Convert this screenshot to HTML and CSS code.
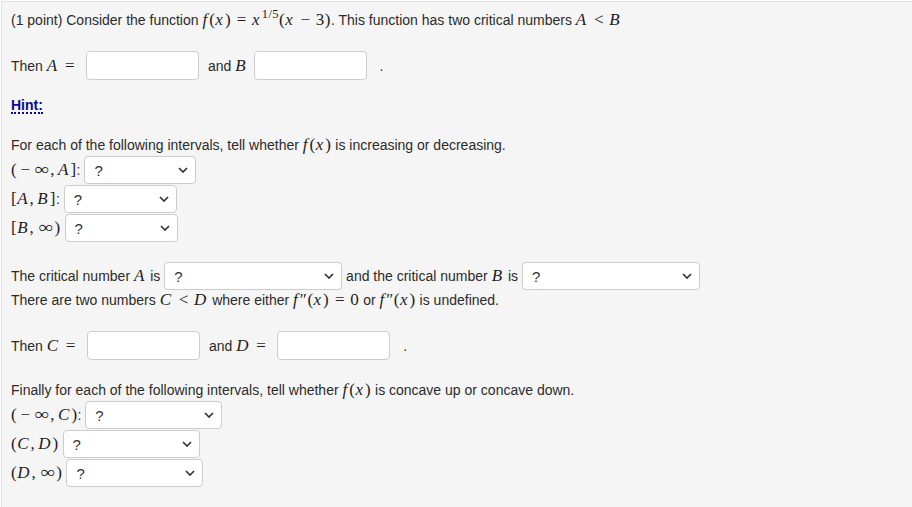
FILE: index.html
```html
<!DOCTYPE html>
<html>
<head>
<meta charset="utf-8">
<link rel="stylesheet" href="styles.css">
</head>
<body>
<div class="problem">
  <div class="line l1">(1 point) Consider the function <span class="m"><i>f</i>(<i>x</i>)<span class="op rel">=</span><i>x</i><sup>1/5</sup>(<i>x</i><span class="op bin">−</span>3)</span>. This function has two critical numbers <span class="m"><i>A</i><span class="op rel">&lt;</span><i>B</i></span></div>

  <div class="row r-ab">Then <span class="m"><i>A</i><span class="op rel">=</span></span> <input class="ans" type="text"> and <span class="m"><i>B</i></span> <input class="ans" type="text"> <span class="dot">.</span></div>

  <div class="line hint-line"><a class="hint" href="#">Hint:</a></div>

  <div class="line for-line">For each of the following intervals, tell whether <span class="m"><i>f</i>(<i>x</i>)</span> is increasing or decreasing.</div>
  <div class="srow first"><span class="m">(<span class="neg">−</span><span class="inf">∞</span>,<span class="th"></span><i>A</i>]</span>: <select class="sel w112"><option>?</option></select></div>
  <div class="srow"><span class="m">[<i>A</i>,<span class="th"></span><i>B</i>]</span>: <select class="sel w113"><option>?</option></select></div>
  <div class="srow"><span class="m">[<i>B</i>,<span class="th"></span><span class="inf">∞</span>)</span> <select class="sel w113"><option>?</option></select></div>

  <div class="srow crit">The critical number <span class="m"><i>A</i></span> is <select class="sel w177"><option>?</option></select> and the critical number <span class="m"><i>B</i></span> is <select class="sel w177"><option>?</option></select></div>
  <div class="line">There are two numbers <span class="m"><i>C</i><span class="op rel">&lt;</span><i>D</i></span> where either <span class="m"><i>f</i>″(<i>x</i>)<span class="op rel">=</span>0</span> or <span class="m"><i>f</i>″(<i>x</i>)</span> is undefined.</div>

  <div class="row r-cd">Then <span class="m"><i>C</i><span class="op rel">=</span></span> <input class="ans" type="text"> and <span class="m"><i>D</i><span class="op rel">=</span></span> <input class="ans" type="text"> <span class="dot">.</span></div>

  <div class="line fin-line">Finally for each of the following intervals, tell whether <span class="m"><i>f</i>(<i>x</i>)</span> is concave up or concave down.</div>
  <div class="srow first"><span class="m">(<span class="neg">−</span><span class="inf">∞</span>,<span class="th"></span><i>C</i>)</span>: <select class="sel w137"><option>?</option></select></div>
  <div class="srow"><span class="m">(<i>C</i>,<span class="th"></span><i>D</i>)</span> <select class="sel w137"><option>?</option></select></div>
  <div class="srow"><span class="m">(<i>D</i>,<span class="th"></span><span class="inf">∞</span>)</span> <select class="sel w137"><option>?</option></select></div>
</div>
</body>
</html>
```

FILE: styles.css
```css
html, body {
  margin: 0;
  padding: 0;
  background: #ffffff;
}

body {
  font-family: "Liberation Sans", Arial, sans-serif;
  font-size: 14px;
  color: #2b2b2b;
}

.problem {
  margin: 1px 0 0 1px;
  border-left: 1px solid #e1e1e1;
  border-top: 1px solid #e1e1e1;
  background: #f5f5f5;
  padding: 8px 10px 0 9px;
  height: 506px;
  box-sizing: border-box;
  overflow: hidden;
}

.line {
  height: 20px;
  line-height: 20px;
  white-space: nowrap;
}

.row {
  height: 29px;
  line-height: 29px;
  white-space: nowrap;
}

.srow {
  height: 28px;
  line-height: 28px;
  margin-top: 1px;
  white-space: nowrap;
}

.r-ab { margin-top: 21px; }
.hint-line { margin-top: 15px; }
.for-line { margin-top: 20px; }
.srow.first { margin-top: 1px; }
.crit { margin-top: 20px; }
.r-cd { margin-top: 21px; }
.fin-line { margin-top: 20px; }

.m {
  font-family: "Liberation Serif", "Times New Roman", serif;
  font-size: 17px;
  color: #1e1e1e;
  letter-spacing: 0.5px;
}

.m i {
  font-style: italic;
  letter-spacing: 2px;
}

.m sup {
  font-size: 12.5px;
  vertical-align: 7px;
  line-height: 0;
  margin-left: 0;
  letter-spacing: 0.5px;
}

.op {
  display: inline-block;
  text-align: center;
  letter-spacing: 0;
  width: 13px;
}

.op.rel { margin: 0 4px; }
.op.bin { margin: 0 4px; }

.neg {
  display: inline-block;
  width: 16px;
  text-align: center;
  letter-spacing: 0;
}

.inf {
  display: inline-block;
  transform: scaleX(1.22);
  margin: 0 2px 0 3px;
  letter-spacing: 0;
}

.th {
  display: inline-block;
  width: 3px;
}

.ans {
  width: 113px;
  height: 29px;
  box-sizing: border-box;
  border: 1px solid #cccccc;
  border-radius: 4px;
  background: #ffffff;
  vertical-align: top;
  margin: 0 5px 0 2px;
  padding: 0 6px;
  font: inherit;
}

.dot {
  margin-left: 4px;
}

.hint {
  color: #0b0b8c;
  font-weight: bold;
  text-decoration: none;
  border-bottom: 2px dotted #0b0b8c;
  line-height: 14px;
  display: inline-block;
}

.sel {
  -webkit-appearance: none;
  appearance: none;
  height: 28px;
  box-sizing: border-box;
  border: 1px solid #cccccc;
  border-radius: 4px;
  background-color: #ffffff;
  background-image: url("data:image/svg+xml;utf8,<svg xmlns='http://www.w3.org/2000/svg' width='10' height='6' viewBox='0 0 10 6'><path d='M1 1 L5 5 L9 1' fill='none' stroke='%23333' stroke-width='1.7'/></svg>");
  background-repeat: no-repeat;
  background-position: right 7px center;
  padding: 0 20px 0 9px;
  font-family: "Liberation Sans", Arial, sans-serif;
  font-size: 15px;
  color: #333333;
  vertical-align: top;
  margin-left: 0;
}

.w112 { width: 112px; }
.w113 { width: 113px; }
.w137 { width: 137px; }
.w177 { width: 178px; }
```
